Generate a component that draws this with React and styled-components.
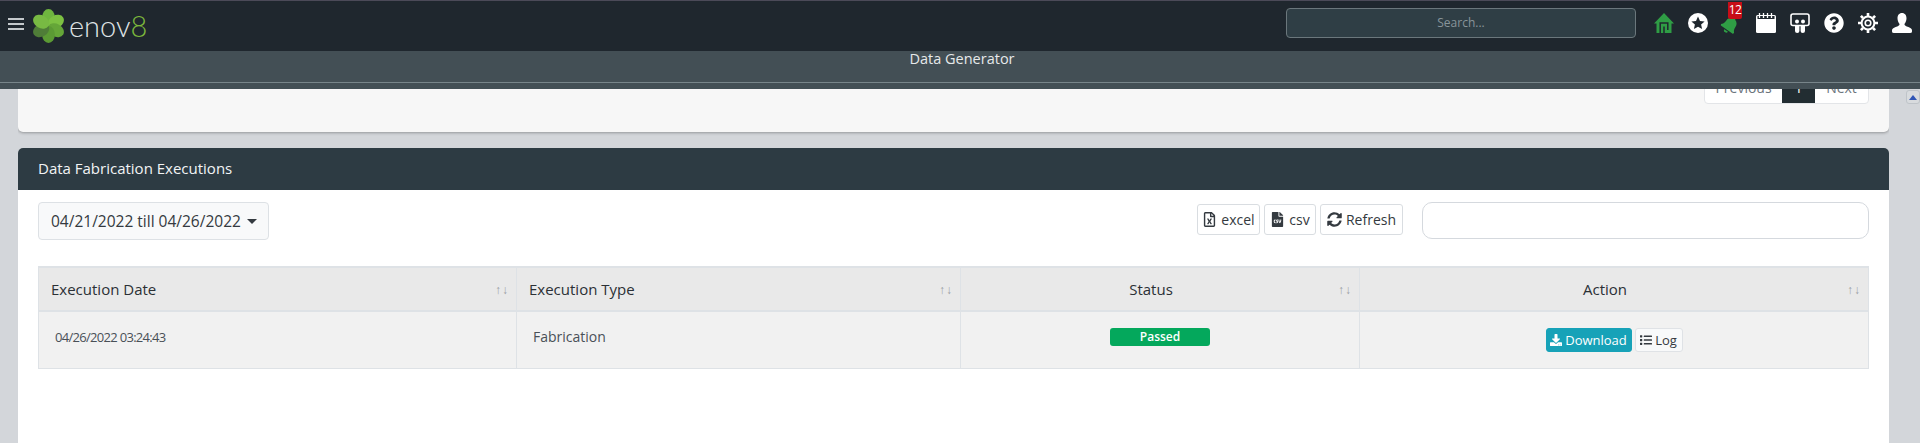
import styled, { createGlobalStyle } from 'styled-components'
import { FaBell, FaDownload, FaFileCsv, FaList, FaQuestionCircle, FaSyncAlt, FaRegFileExcel } from 'react-icons/fa'

const GlobalStyle = createGlobalStyle`
  html, body {
    margin: 0;
    height: 100%;
    overflow: hidden;
  }
  body {
    font-family: "Open Sans", "Liberation Sans", sans-serif;
    background-color: #d3d6da;
  }
`

const Page = styled.div`
  display: flex;
  flex-direction: column;
  height: 443px;
  overflow: hidden;
`

const TopBar = styled.header`
  display: flex;
  align-items: center;
  flex: none;
  box-sizing: border-box;
  height: 51px;
  padding: 0 8px 7px 8px;
  background-color: #1f272e;
  border-top: 1px solid #4b4a58;
`

const Burger = styled.div`
  display: flex;
  flex-direction: column;
  gap: 3px;
  width: 16px;
  margin-right: 9px;
  padding-top: 2px;
`

const BurgerBar = styled.span`
  display: block;
  height: 2px;
  background-color: #c4c9cc;
`

const Logo = styled.div`
  display: flex;
  align-items: center;
  gap: 5px;
  margin-top: 7px;
`

const LogoText = styled.span`
  font-family: Lato, "Open Sans", sans-serif;
  font-size: 29px;
  font-weight: 300;
  line-height: 34px;
  color: #dfe3e5;
`

const LogoEight = styled.span`
  color: #7cb83c;
`

const SearchBox = styled.div`
  box-sizing: border-box;
  width: 350px;
  height: 30px;
  margin-left: auto;
  margin-right: 18px;
  font-size: 12px;
  line-height: 28px;
  text-align: center;
  color: #88949a;
  background-color: #2f3e45;
  border: 1px solid #6b777c;
  border-radius: 4px;
`

const IconRow = styled.nav`
  display: flex;
  align-items: center;
  gap: 14px;
`

const NavIcon = styled.span`
  position: relative;
  display: flex;
  align-items: center;
  justify-content: center;
  width: 20px;
  height: 20px;
  color: ${p => p.$color || '#fff'};
`

const BellGlyph = styled(FaBell)`
  margin: 4px 4px 0 0;
  transform: rotate(35deg);
`

const Badge = styled.span`
  position: absolute;
  top: -11px;
  left: 6px;
  width: 14px;
  height: 17px;
  font-size: 12px;
  letter-spacing: -0.5px;
  line-height: 16px;
  text-align: center;
  color: #fff;
  background-color: #c70d17;
  border-radius: 0 0 2px 2px;
`

const SubBar = styled.div`
  flex: none;
  box-sizing: border-box;
  height: 38px;
  background-color: #434f55;
`

const SubTitle = styled.div`
  box-sizing: border-box;
  height: 32px;
  padding-left: 4px;
  font-size: 14.5px;
  line-height: 16px;
  text-align: center;
  color: #e6e9ea;
  border-bottom: 1px solid #78858a;
`

const Main = styled.div`
  display: flex;
  flex: 1;
  min-height: 0;
  padding-left: 18px;
`

const Content = styled.main`
  flex: 1;
  min-width: 0;
  overflow: hidden;
`

const Rail = styled.div`
  flex: none;
  width: 31px;
  padding-top: 1px;
`

const ScrollUp = styled.div`
  display: flex;
  align-items: center;
  justify-content: center;
  box-sizing: border-box;
  width: 14px;
  height: 14px;
  margin-left: 17px;
  background-color: #d8dbde;
  border: 1px solid #bfc4c9;
  border-radius: 3px;

  &::before {
    content: '';
    border-left: 4px solid transparent;
    border-right: 4px solid transparent;
    border-bottom: 5px solid #2f55b5;
  }
`

const TopCard = styled.section`
  display: flex;
  justify-content: flex-end;
  padding: 0 20px 28px 0;
  background-color: #f7f7f7;
  border-radius: 0 0 5px 5px;
  box-shadow: 0 1px 3px rgba(0,0,0,0.3);
`

const Pagination = styled.div`
  display: flex;
  box-sizing: border-box;
  height: 38px;
  margin-top: -23px;
  background-color: #fff;
  border: 1px solid #e3e5e8;
  border-radius: 4px;
`

const PageLink = styled.span`
  box-sizing: border-box;
  width: ${p => p.$width}px;
  font-size: 14px;
  line-height: 42px;
  text-align: center;
  color: ${p => (p.$active ? '#fff' : '#6c757d')};
  background-color: ${p => (p.$active ? '#222d32' : 'transparent')};
`

const Card = styled.section`
  margin-top: 16px;
  min-height: 295px;
  background-color: #fff;
  border-radius: 5px 5px 0 0;
`

const CardHeader = styled.div`
  box-sizing: border-box;
  height: 42px;
  padding: 0 20px;
  font-size: 15px;
  line-height: 40px;
  color: #f2f4f5;
  background-color: #2d3b43;
  border-radius: 5px 5px 0 0;
`

const CardBody = styled.div`
  padding: 12px 20px;
`

const Toolbar = styled.div`
  display: flex;
  align-items: center;
  margin-bottom: 26px;
`

const DateButton = styled.button`
  display: flex;
  align-items: center;
  gap: 6px;
  box-sizing: border-box;
  width: 231px;
  height: 38px;
  padding: 0 12px;
  font-family: inherit;
  font-size: 15.5px;
  white-space: nowrap;
  color: #343a40;
  background-color: #f8f9fa;
  border: 1px solid #dde1e5;
  border-radius: 4px;

  &::after {
    content: '';
    border-left: 5px solid transparent;
    border-right: 5px solid transparent;
    border-top: 5px solid #343a40;
  }
`

const ExportButton = styled.button`
  display: flex;
  align-items: center;
  justify-content: center;
  gap: 4px;
  box-sizing: border-box;
  width: ${p => p.$width}px;
  height: 31px;
  margin-left: ${p => (p.$first ? 'auto' : '4px')};
  margin-bottom: 3px;
  padding: 0;
  font-family: inherit;
  font-size: 14px;
  color: #343a40;
  background-color: #fff;
  border: 1px solid #d9dde1;
  border-radius: 3px;
`

const SearchInput = styled.input`
  box-sizing: border-box;
  width: 447px;
  height: 37px;
  margin-left: 19px;
  margin-bottom: 1px;
  background-color: #fff;
  border: 1px solid #d5d9de;
  border-radius: 10px;
`

const Table = styled.table`
  width: 100%;
  table-layout: fixed;
  border-collapse: collapse;
`

const Col = styled.col`
  width: ${p => p.$width}px;
`

const Th = styled.th`
  position: relative;
  box-sizing: border-box;
  height: 44px;
  padding: ${p => (p.$center ? '0 22px 0 4px' : '0 22px 0 12px')};
  font-size: 15px;
  font-weight: 400;
  text-align: ${p => (p.$center ? 'center' : 'left')};
  color: #2b3035;
  background-color: #e9e9e9;
  border: 1px solid #dee2e6;
  border-width: 2px 1px;
`

const SortMark = styled.span`
  position: absolute;
  top: 13px;
  right: 7px;
  font-size: 12px;
  letter-spacing: 1px;
  color: #9aa0a5;
`

const Td = styled.td`
  box-sizing: border-box;
  height: 57px;
  padding: ${p => (p.$center ? '16px 4px 0 4px' : '16px 4px 0 16px')};
  font-size: 14px;
  line-height: 18px;
  vertical-align: top;
  text-align: ${p => (p.$center ? 'center' : 'left')};
  color: #495057;
  background-color: #f1f1f1;
  border: 1px solid #dee2e6;
`

const DateText = styled.span`
  font-size: 13px;
  letter-spacing: -0.7px;
`

const StatusPill = styled.div`
  width: 100px;
  height: 18px;
  margin: 0 auto;
  font-size: 12px;
  font-weight: 600;
  line-height: 18px;
  color: #fff;
  background-color: #04a85c;
  border-radius: 3px;
`

const Actions = styled.div`
  display: flex;
  justify-content: center;
  gap: 3px;
`

const ActionButton = styled.button`
  display: flex;
  align-items: center;
  justify-content: center;
  gap: 3px;
  box-sizing: border-box;
  width: ${p => p.$width}px;
  height: 24px;
  padding: 0;
  font-family: inherit;
  font-size: 13px;
  color: ${p => (p.$primary ? '#fff' : '#343a40')};
  background-color: ${p => (p.$primary ? '#17a2b8' : '#f8f9fa')};
  border: 1px solid ${p => (p.$primary ? '#17a2b8' : '#dfe2e6')};
  border-radius: 3px;
`

function Clover() {
  const petals = [
    [0, '#6fb63f'],
    [60, '#7cc142'],
    [120, '#65a638'],
    [180, '#5b9a34'],
    [240, '#4f7d38'],
    [300, '#78ba43'],
  ]
  return (
    <svg width="31" height="34" viewBox="0 0 31 34">
      {petals.map(([angle, fill]) => (
        <ellipse key={angle} cx="15.5" cy="8.5" rx="6.4" ry="8.5" fill={fill} transform={`rotate(${angle} 15.5 17)`} />
      ))}
    </svg>
  )
}

function HomeIcon() {
  return (
    <svg width="20" height="20" viewBox="0 0 20 20">
      <path fill="#2f9d45" d="M10 0 20 10.5H17.5V20H2.5V10.5H0Z" />
      <path fill="none" stroke="#1f272e" strokeWidth="1.5" d="M6.2 20V10H13.8V17M10 20V13.5" />
    </svg>
  )
}

function StarIcon() {
  return (
    <svg width="20" height="20" viewBox="0 0 20 20">
      <circle cx="10" cy="10" r="10" fill="#fff" />
      <path fill="#1f272e" d="M10 3.6 12 8 16.6 8.4 13.1 11.5 14.1 16.1 10 13.7 5.9 16.1 6.9 11.5 3.4 8.4 8 8Z" />
    </svg>
  )
}

function CalendarIcon() {
  return (
    <svg width="20" height="20" viewBox="0 0 20 20">
      <rect y="2" width="20" height="18" rx="1.5" fill="#fff" />
      <rect x="1.5" y="3" width="17" height="3" fill="#1f272e" />
      <path stroke="#fff" strokeWidth="1.3" d="M3.5 0V5M7.5 0V5M11.5 0V5M15.5 0V5" />
    </svg>
  )
}

function BoardIcon() {
  return (
    <svg width="20" height="20" viewBox="0 0 20 20">
      <rect x="1" y="1" width="18" height="11.5" rx="2" fill="none" stroke="#fff" strokeWidth="1.6" />
      <circle cx="7" cy="8.5" r="2" fill="#fff" />
      <circle cx="13" cy="8.5" r="2" fill="#fff" />
      <path fill="#fff" d="M5 12H9.4V18Q9.4 20 7.2 20T5 18ZM10.6 12H15V18Q15 20 12.8 20T10.6 18Z" />
    </svg>
  )
}

function GearIcon() {
  return (
    <svg width="20" height="20" viewBox="0 0 20 20" fill="none" stroke="#fff">
      <circle cx="10" cy="10" r="6.4" strokeWidth="2" />
      <circle cx="10" cy="10" r="2.8" strokeWidth="1.6" />
      <path strokeWidth="2.6" d="M10 0V3M10 17V20M0 10H3M17 10H20M2.9 2.9 5 5M15 15 17.1 17.1M2.9 17.1 5 15M15 5 17.1 2.9" />
    </svg>
  )
}

function UserIcon() {
  return (
    <svg width="20" height="20" viewBox="0 0 20 20">
      <path fill="#fff" d="M10 0C13 0 14.5 2.3 14.5 5.2 14.5 7.6 13.5 9.6 12.4 11 12.4 12.6 14 13.2 16.4 14 18.6 14.8 20 15.8 20 17.5V18.5Q20 20 18 20H2Q0 20 0 18.5V17.5C0 15.8 1.4 14.8 3.6 14 6 13.2 7.6 12.6 7.6 11 6.5 9.6 5.5 7.6 5.5 5.2 5.5 2.3 7 0 10 0Z" />
    </svg>
  )
}

export default function App() {
  return (
    <Page>
      <GlobalStyle />
      <TopBar>
        <Burger>
          <BurgerBar />
          <BurgerBar />
          <BurgerBar />
        </Burger>
        <Logo>
          <Clover />
          <LogoText>enov<LogoEight>8</LogoEight></LogoText>
        </Logo>
        <SearchBox>Search...</SearchBox>
        <IconRow>
          <NavIcon><HomeIcon /></NavIcon>
          <NavIcon><StarIcon /></NavIcon>
          <NavIcon $color="#2f9d45">
            <BellGlyph size={18} />
            <Badge>12</Badge>
          </NavIcon>
          <NavIcon><CalendarIcon /></NavIcon>
          <NavIcon><BoardIcon /></NavIcon>
          <NavIcon><FaQuestionCircle size={20} /></NavIcon>
          <NavIcon><GearIcon /></NavIcon>
          <NavIcon><UserIcon /></NavIcon>
        </IconRow>
      </TopBar>
      <SubBar>
        <SubTitle>Data Generator</SubTitle>
      </SubBar>
      <Main>
        <Content>
          <TopCard>
            <Pagination>
              <PageLink $width={77}>Previous</PageLink>
              <PageLink $width={33} $active>1</PageLink>
              <PageLink $width={53}>Next</PageLink>
            </Pagination>
          </TopCard>
          <Card>
            <CardHeader>Data Fabrication Executions</CardHeader>
            <CardBody>
              <Toolbar>
                <DateButton>04/21/2022 till 04/26/2022</DateButton>
                <ExportButton $width={63} $first><FaRegFileExcel size={15} />excel</ExportButton>
                <ExportButton $width={52}><FaFileCsv size={15} />csv</ExportButton>
                <ExportButton $width={83}><FaSyncAlt size={15} />Refresh</ExportButton>
                <SearchInput />
              </Toolbar>
              <Table>
                <colgroup>
                  <Col $width={478} />
                  <Col $width={444} />
                  <Col $width={399} />
                  <Col />
                </colgroup>
                <thead>
                  <tr>
                    <Th>Execution Date<SortMark>↑↓</SortMark></Th>
                    <Th>Execution Type<SortMark>↑↓</SortMark></Th>
                    <Th $center>Status<SortMark>↑↓</SortMark></Th>
                    <Th $center>Action<SortMark>↑↓</SortMark></Th>
                  </tr>
                </thead>
                <tbody>
                  <tr>
                    <Td><DateText>04/26/2022 03:24:43</DateText></Td>
                    <Td>Fabrication</Td>
                    <Td $center><StatusPill>Passed</StatusPill></Td>
                    <Td $center>
                      <Actions>
                        <ActionButton $primary $width={86}><FaDownload size={12} />Download</ActionButton>
                        <ActionButton $width={48}><FaList size={12} />Log</ActionButton>
                      </Actions>
                    </Td>
                  </tr>
                </tbody>
              </Table>
            </CardBody>
          </Card>
        </Content>
        <Rail><ScrollUp /></Rail>
      </Main>
    </Page>
  )
}
